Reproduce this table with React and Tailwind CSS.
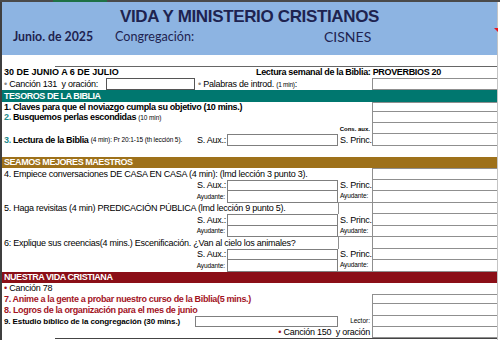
import React from "react";

const RB = ({ t }) => (
  <div
    className={
      t
        ? "w-[125px] h-full shrink-0 border-l border-b border-t border-[#8f8f8f]"
        : "w-[125px] h-full shrink-0 border-l border-b border-[#8f8f8f]"
    }
  />
);

const REG = "text-[9px] tracking-[-0.25px] leading-none whitespace-nowrap";
const BOLD = "text-[9px] font-bold tracking-[-0.35px] leading-none whitespace-nowrap";
const SMALL = "text-[6.5px] tracking-[-0.1px] leading-none whitespace-nowrap";

function Group({ title, first, h }) {
  return (
    <>
      <div className={"flex items-center " + h[0]}>
        <div className={"flex-1 pl-[2px] " + REG}>{title}</div>
        <div className={first ? "w-[34px] h-full" : "w-[34px] h-full border-l border-[#8f8f8f]"} />
        <RB t={first} />
      </div>
      <div className={"flex items-center " + h[1]}>
        <div className={"w-[225px] flex justify-end pr-[1px] " + REG}>S. Aux.:</div>
        <div className="w-[111px] h-full border border-[#7f7f7f]" />
        <div className={"w-[34px] pl-[2px] " + REG}>S. Princ.</div>
        <RB />
      </div>
      <div className={"flex items-center " + h[2]}>
        <div className={"w-[225px] flex justify-end pr-[2px] " + SMALL}>Ayudante:</div>
        <div className="w-[111px] h-full border-l border-r border-b border-[#7f7f7f]" />
        <div className={"w-[34px] h-full flex items-center pl-[2px] border-b border-[#8f8f8f] " + SMALL}>Ayudante:</div>
        <RB />
      </div>
    </>
  );
}

export default function App() {
  return (
    <div className="w-[500px] h-[340px] overflow-hidden bg-white relative font-['Liberation_Sans',Arial,sans-serif] text-black">
      <div className="h-[2px] flex">
        <div className="w-[53px] bg-[#4a4a4a]" />
        <div className="w-[54px] bg-[#1e7145]" />
        <div className="flex-1 bg-[#4a4a4a]" />
      </div>
      <div className="flex h-[338px]">
        <div className="w-[2px] bg-[#3f3f3f]" />
        <div className="w-[495px] flex flex-col">
          {/* header */}
          <div className="h-[53px] bg-[#8db4e2] flex flex-col text-[#1e2350]">
            <div className="h-[23px] flex items-end justify-center">
              <div className="text-[17px] font-bold tracking-[-0.35px] leading-[17px]">
                VIDA Y MINISTERIO CRISTIANOS
              </div>
            </div>
            <div className="h-[24px] flex items-center pl-[11px] font-['Lato',sans-serif]">
              <div className="w-[102px] text-[12.3px] font-bold leading-none">Junio. de 2025</div>
              <div className="w-[209px] text-[12.6px] leading-none">Congregación:</div>
              <div className="text-[14px] leading-none">CISNES</div>
            </div>
          </div>
          <div className="h-[11px]" />
          <div className="h-px flex">
            <div className="w-[53px]" />
            <div className="flex-1 bg-[#666]" />
          </div>
          {/* row A */}
          <div className="h-[11px] flex items-center">
            <div className={"w-[254px] pl-[2px] text-[9px] font-bold leading-none whitespace-nowrap"}>30 DE JUNIO A 6 DE JULIO</div>
            <div className={"text-[9px] font-bold tracking-[-0.33px] leading-none whitespace-nowrap"}>
              Lectura semanal de la Biblia: PROVERBIOS 20
            </div>
          </div>
          {/* row B */}
          <div className="h-[12px] flex items-center">
            <div className={"w-[104px] pl-[2px] " + REG}>
              <span className="text-[#8a8a8a]">•</span> Canción 131&nbsp; y oración:
            </div>
            <div className="w-[89px] h-full border border-[#555]" />
            <div className={"flex-1 pl-[3px] " + REG}>
              <span className="text-[#8a8a8a]">•</span> Palabras de introd. <span className="text-[6.5px]">(1 min)</span>:
            </div>
            <RB t />
          </div>
          {/* teal band */}
          <div className="h-[12px] flex items-center bg-[#00776f] text-white pl-[2px]">
            <div className="text-[9px] font-bold tracking-[-0.45px] leading-none">TESOROS DE LA BIBLIA</div>
          </div>
          <div className="h-[10px] flex items-center">
            <div className={"flex-1 pl-[2px] " + BOLD}>1. Claves para que el noviazgo cumpla su objetivo (10 mins.)</div>
            <RB t />
          </div>
          <div className="h-[11px] flex items-center">
            <div className={"flex-1 pl-[2px] " + BOLD}>
              <span className="text-[#238a8a]">2.</span> Busquemos perlas escondidas{" "}
              <span className="text-[6.5px] font-normal tracking-[-0.1px]">(10 min)</span>
            </div>
            <RB />
          </div>
          <div className="h-[11px] flex items-center">
            <div className="flex-1 flex justify-end pr-[2px] text-[6px] font-bold leading-none whitespace-nowrap">Cons. aux.</div>
            <RB />
          </div>
          <div className="h-[12px] flex items-center">
            <div className={"w-[225px] flex items-center pl-[2px] " + BOLD}>
              <span className="text-[#238a8a]">3.</span>&nbsp;Lectura de la Biblia&nbsp;
              <span className="text-[6.5px] font-normal tracking-[-0.1px]">(4 min): Pr 20:1-15 (th lección 5).</span>
              <span className="ml-auto pr-[1px] text-[9px] font-normal tracking-[-0.25px]">S. Aux.:</span>
            </div>
            <div className="w-[111px] h-full border border-[#7f7f7f]" />
            <div className={"w-[34px] pl-[2px] " + REG}>S. Princ.</div>
            <RB />
          </div>
          <div className="h-[11px]" />
          {/* brown band */}
          <div className="h-[11px] flex items-center bg-[#9e711a] text-white pl-[2px]">
            <div className="text-[9px] font-bold tracking-[-0.45px] leading-none">SEAMOS MEJORES MAESTROS</div>
          </div>
          <Group
            first
            h={["h-[12px]", "h-[11px]", "h-[12px]"]}
            title="4. Empiece conversaciones DE CASA EN CASA (4 min): (lmd lección 3 punto 3)."
          />
          <Group
            h={["h-[11px]", "h-[12px]", "h-[11px]"]}
            title="5. Haga revisitas (4 min) PREDICACIÓN PÚBLICA (lmd lección 9 punto 5)."
          />
          <Group
            h={["h-[12px]", "h-[11px]", "h-[12px]"]}
            title="6:  Explique sus creencias(4 mins.) Escenificación.  ¿Van al cielo los animales?"
          />
          {/* red band */}
          <div className="h-[11px] flex items-center bg-[#8b0e17] text-white pl-[2px]">
            <div className="text-[9px] font-bold tracking-[-0.45px] leading-none">NUESTRA VIDA CRISTIANA</div>
          </div>
          <div className="h-[11px] flex items-center pl-[2px]">
            <div className={REG}>
              <span className="text-[#a01020]">•</span> Canción 78
            </div>
          </div>
          <div className="h-[10px] flex items-center">
            <div className={"flex-1 pl-[2px] text-[#a3141f] " + BOLD}>
              7. Anime a la gente a probar nuestro curso de la Biblia(5 mins.)
            </div>
            <RB t />
          </div>
          <div className="h-[12px] flex items-center">
            <div className={"flex-1 pl-[2px] text-[#a3141f] " + BOLD}>
              8. Logros de la organización para el mes de junio
            </div>
            <RB />
          </div>
          <div className="h-[11px] flex items-center">
            <div className="w-[193px] pl-[2px] text-[8px] font-bold tracking-[-0.1px] leading-none whitespace-nowrap">
              9. Estudio bíblico de la congregación (30 mins.)
            </div>
            <div className="w-[143px] h-full border border-[#7f7f7f]" />
            <div className="w-[34px] flex justify-end pr-[2px] text-[6.5px] leading-none">Lector:</div>
            <RB />
          </div>
          <div className="h-[11px] flex items-center">
            <div className={"flex-1 flex justify-end pr-[2px] " + REG}>
              <span className="text-[#a01020]">•</span>&nbsp;Canción 150&nbsp; y oración
            </div>
            <RB />
          </div>
          <div className="h-px flex">
            <div className="w-[53px]" />
            <div className="flex-1 bg-[#444]" />
          </div>
        </div>
        <div className="w-px bg-[#c4c4c4]" />
        <div className="w-[2px]" />
      </div>
      <div className="absolute top-[28px] left-[494px] w-0 h-0 border-t-[4px] border-t-[#e8141c] border-l-[4px] border-l-transparent" />
    </div>
  );
}
